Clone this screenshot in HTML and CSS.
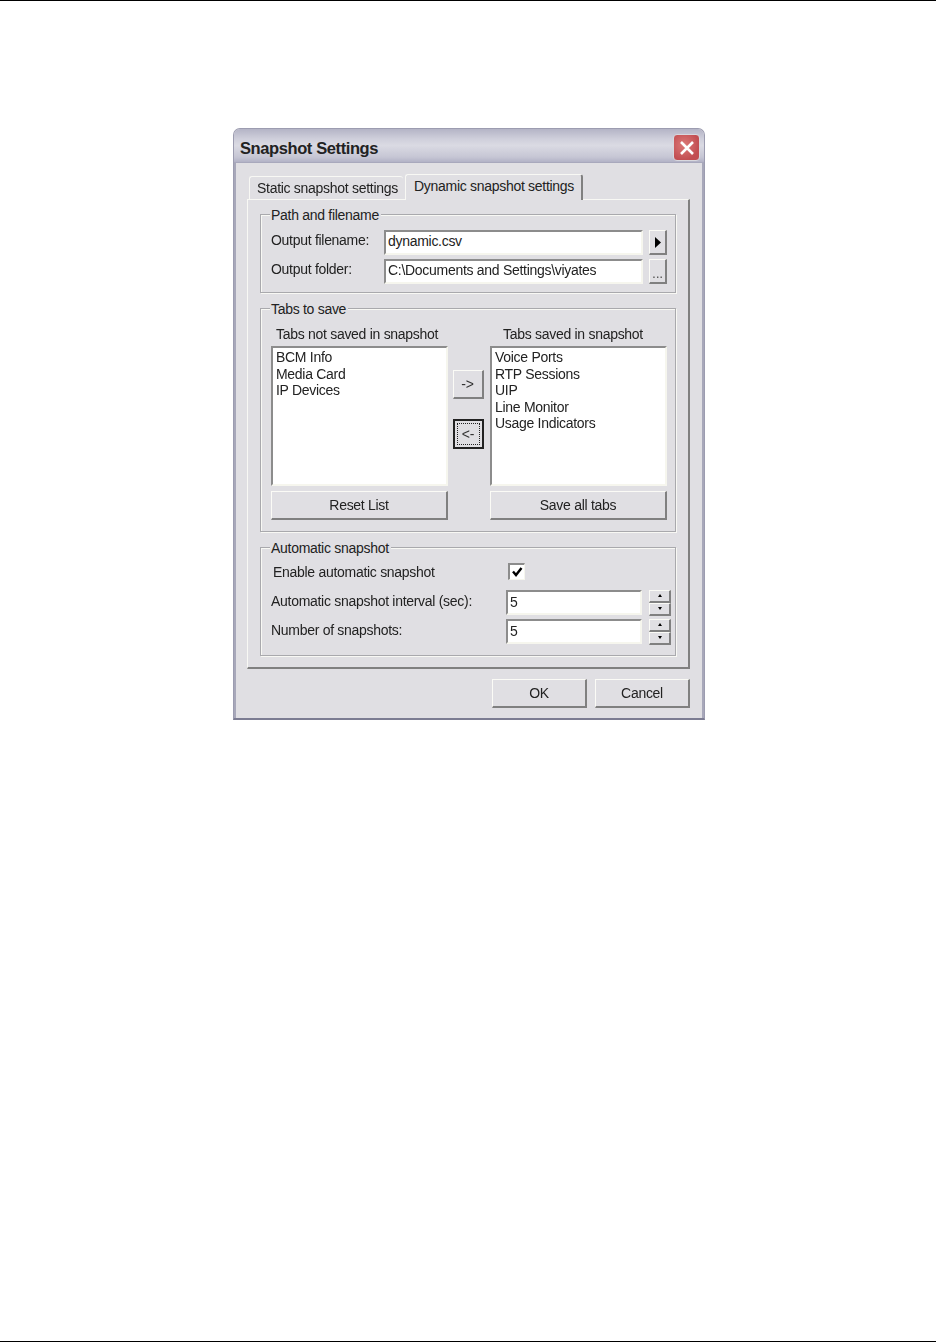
FILE: index.html
```html
<!DOCTYPE html>
<html lang="en">
<head>
<meta charset="utf-8">
<title>Snapshot Settings</title>
<link rel="stylesheet" href="styles.css">
</head>
<body>
<div class="page">
  <div class="dialog">
    <div class="titlebar">
      <span class="title">Snapshot Settings</span>
      <span class="close"><svg width="18" height="18" viewBox="0 0 18 18"><path d="M3 3L15 15M15 3L3 15" stroke="#fff" stroke-width="2.6" fill="none"/></svg></span>
    </div>
    <div class="client">
      <div class="tabs">
        <div class="tab tab-static">Static snapshot settings</div>
        <div class="tab tab-dynamic">Dynamic snapshot settings</div>
      </div>
      <div class="panel">
        <section class="group group-path">
          <span class="legend">Path and filename</span>
          <div class="path-row path-row-first">
            <span class="path-label">Output filename:</span>
            <div class="field path-field">dynamic.csv</div>
            <div class="btn btn-browse"><svg width="7" height="11" viewBox="0 0 7 11"><path d="M1 0L7 5.5L1 11Z" fill="#000"/></svg></div>
          </div>
          <div class="path-row">
            <span class="path-label">Output folder:</span>
            <div class="field path-field">C:\Documents and Settings\viyates</div>
            <div class="btn btn-browse btn-dots">...</div>
          </div>
        </section>
        <section class="group group-tabs">
          <span class="legend">Tabs to save</span>
          <div class="tabs-grid">
            <div class="col-head col-head-left">Tabs not saved in snapshot</div>
            <div class="col-spacer"></div>
            <div class="col-head col-head-right">Tabs saved in snapshot</div>
            <div class="listbox">
              <div>BCM Info</div><div>Media Card</div><div>IP Devices</div>
            </div>
            <div class="movers">
              <div class="btn btn-move">-&gt;</div>
              <div class="btn btn-move btn-default"><span class="focus">&lt;-</span></div>
            </div>
            <div class="listbox">
              <div>Voice Ports</div><div>RTP Sessions</div><div>UIP</div><div>Line Monitor</div><div>Usage Indicators</div>
            </div>
            <div class="btn btn-wide">Reset List</div>
            <div class="col-spacer"></div>
            <div class="btn btn-wide">Save all tabs</div>
          </div>
        </section>
        <section class="group group-auto">
          <span class="legend">Automatic snapshot</span>
          <div class="auto-row auto-row-check">
            <span class="auto-check-label">Enable automatic snapshot</span>
            <span class="checkbox"><svg width="12" height="12" viewBox="0 0 12 12"><path d="M2 5.5L5 9L10.5 2" stroke="#000" stroke-width="2.4" fill="none"/></svg></span>
          </div>
          <div class="auto-row">
            <span class="auto-label">Automatic snapshot interval (sec):</span>
            <div class="field auto-field">5</div>
            <div class="spin">
              <div class="btn spin-btn"><span class="arrow-up"></span></div>
              <div class="btn spin-btn"><span class="arrow-down"></span></div>
            </div>
          </div>
          <div class="auto-row">
            <span class="auto-label">Number of snapshots:</span>
            <div class="field auto-field">5</div>
            <div class="spin">
              <div class="btn spin-btn"><span class="arrow-up"></span></div>
              <div class="btn spin-btn"><span class="arrow-down"></span></div>
            </div>
          </div>
        </section>
      </div>
      <div class="footer">
        <div class="btn btn-footer">OK</div>
        <div class="btn btn-footer">Cancel</div>
      </div>
    </div>
  </div>
</div>
</body>
</html>
```
FILE: styles.css
```css
* { box-sizing: border-box; }
html, body { margin: 0; padding: 0; background: #fff; }
body { font-family: "Liberation Sans", Arial, sans-serif; font-size: 14px; letter-spacing: -0.29px; color: #222; }
.page {
  width: 936px;
  height: 1342px;
  border-top: 1px solid #000;
  border-bottom: 1px solid #000;
  padding: 127px 0 0 233px;
}
.dialog {
  width: 472px;
  height: 592px;
  display: flex;
  flex-direction: column;
  border-radius: 7px 7px 0 0;
  background: #e0dfe3;
  border: 1px solid #9c9cb0;
  border-bottom: 2px solid #7c7c92;
  filter: blur(0.5px);
}
.titlebar {
  height: 34px;
  flex: none;
  padding: 5px 4px 0 6px;
  display: flex;
  justify-content: space-between;
  align-items: flex-start;
  border-radius: 6px 6px 0 0;
  border-bottom: 1px solid #a8a8bc;
  background: linear-gradient(#b4b4c6 0, #cfcfdb 30%, #dadae3 50%, #c6c6d4 85%, #b2b2c6 100%);
}
.title { font-weight: 700; font-size: 16.5px; line-height: 28px; letter-spacing: -0.4px; color: #222; }
.close {
  width: 27px;
  height: 27px;
  margin: 0;
  display: flex;
  align-items: center;
  justify-content: center;
  border-radius: 4px;
  background: radial-gradient(circle at 40% 40%, #dc7a78, #c24e52 70%);
  border: 1px solid #d8d8de;
}
.client {
  flex: 1;
  padding: 10px 12px 0 11px;
  border-left: 2px solid #a8a8ba;
  border-right: 2px solid #a8a8ba;
  display: flex;
  flex-direction: column;
}
.tabs { height: 26px; display: flex; align-items: flex-end; padding-left: 2px; flex: none; }
.tab {
  border: 1px solid #f8f8f4;
  border-bottom: 0;
  border-radius: 3px 3px 0 0;
  background: #e0dfe3;
  white-space: nowrap;
}
.tab-static { width: 154px; height: 23px; padding: 3px 0 0 7px; border-right: 0; }
.tab-dynamic {
  width: 178px;
  height: 26px;
  margin-left: 2px;
  padding: 3px 0 0 8px;
  border-right: 2px solid #808080;
  position: relative;
  z-index: 1;
  margin-bottom: -1px;
}
.panel {
  width: 443px;
  height: 470px;
  flex: none;
  padding: 14px 13px 0 12px;
  border: 1px solid #f8f8f4;
  border-right: 2px solid #808080;
  border-bottom: 2px solid #808080;
  display: flex;
  flex-direction: column;
  gap: 15px;
}
.group {
  position: relative;
  width: 416px;
  flex: none;
  border: 1px solid #a9a9ad;
  box-shadow: 1px 1px 0 #f8f8f4, inset 1px 1px 0 #f8f8f4;
}
.legend {
  position: absolute;
  top: -8px;
  left: 9px;
  padding: 0 2px 0 1px;
  line-height: 16px;
  background: #e0dfe3;
  white-space: nowrap;
}
.group-path { height: 79px; padding: 15px 0 0 10px; }
.path-row { display: flex; align-items: center; height: 25px; margin-bottom: 4px; }
.path-label { width: 113px; flex: none; position: relative; top: -3px; }
.field {
  height: 25px;
  background: #fff;
  border-top: 2px solid #8c8c8c;
  border-left: 2px solid #8c8c8c;
  border-right: 2px solid #f6f6ee;
  border-bottom: 2px solid #f6f6ee;
  padding: 0 0 0 2px;
  line-height: 19px;
}
.path-field { width: 259px; flex: none; }
.btn {
  background: #e0dfe3;
  border: 1px solid;
  border-color: #fbfbf6 #808080 #808080 #fbfbf6;
  border-right-width: 2px;
  border-bottom-width: 2px;
  display: flex;
  align-items: center;
  justify-content: center;
  white-space: nowrap;
}
.btn-browse { width: 18px; height: 25px; margin-left: 6px; flex: none; }
.btn-dots { align-items: flex-end; line-height: 14px; color: #555; padding-bottom: 2px; }
.group-tabs { height: 224px; padding: 17px 9px 0 10px; }
.tabs-grid {
  display: grid;
  grid-template-columns: 177px 42px 177px;
  grid-template-rows: 20px 140px 34px;
}
.col-head { line-height: 16px; white-space: nowrap; }
.col-head-left { padding-left: 5px; }
.col-head-right { padding-left: 13px; }
.listbox {
  background: #fff;
  border-top: 2px solid #8c8c8c;
  border-left: 2px solid #8c8c8c;
  border-right: 2px solid #f6f6ee;
  border-bottom: 2px solid #f6f6ee;
  padding: 1px 0 0 3px;
  line-height: 16.5px;
}
.movers {
  display: flex;
  flex-direction: column;
  align-items: center;
  gap: 20px;
  padding: 24px 2px 0 0;
}
.btn-move { width: 31px; height: 29px; color: #333; }
.btn-default { border: 2px solid #222; height: 30px; padding: 2px; }
.focus {
  width: 100%;
  height: 100%;
  display: flex;
  align-items: center;
  justify-content: center;
  border: 1px dotted #222;
}
.btn-wide { height: 29px; margin-top: 5px; }
.group-auto { height: 109px; padding: 15px 0 0 10px; }
.auto-row { display: flex; align-items: center; height: 25px; margin-bottom: 4px; }
.auto-row-check { height: 17px; margin-bottom: 10px; padding-left: 2px; }
.auto-check-label { width: 235px; flex: none; }
.auto-label { width: 235px; flex: none; white-space: nowrap; position: relative; top: -2px; }
.checkbox {
  width: 17px;
  height: 17px;
  background: #fff;
  border-top: 2px solid #8c8c8c;
  border-left: 2px solid #8c8c8c;
  border-right: 1px solid #f6f6ee;
  border-bottom: 1px solid #f6f6ee;
  display: flex;
  align-items: center;
  justify-content: center;
}
.auto-field { width: 136px; flex: none; padding-top: 1px; }
.spin { width: 22px; height: 26px; margin-left: 7px; flex: none; display: flex; flex-direction: column; }
.spin-btn { flex: 1; }
.arrow-up { width: 0; height: 0; border: 2.5px solid transparent; border-top: 0; border-bottom: 3px solid #000; }
.arrow-down { width: 0; height: 0; border: 2.5px solid transparent; border-bottom: 0; border-top: 3px solid #000; }
.footer { display: flex; justify-content: flex-end; gap: 8px; padding-top: 10px; width: 443px; }
.btn-footer { width: 95px; height: 29px; }
```
